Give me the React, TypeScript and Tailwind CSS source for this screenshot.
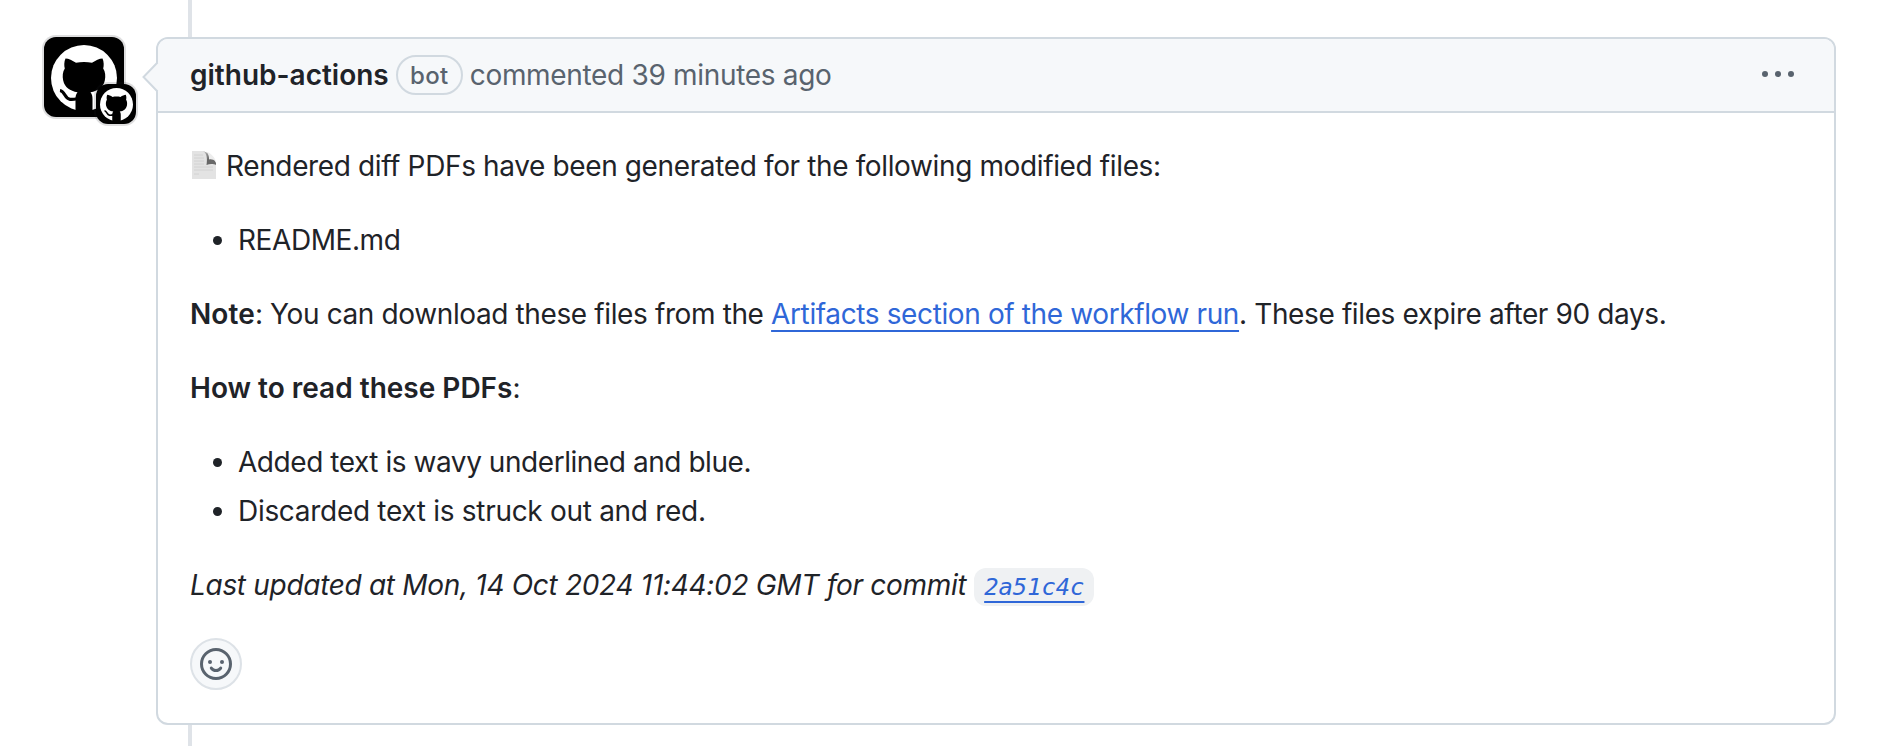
import React from "react";

function Mark({ className }: { className: string }) {
  return (
    <svg viewBox="0 0 66 66" className={className}>
      <circle cx="33" cy="33" r="33" fill="#fff" />
      <path
        d="M14.500 13.500C17.500 13.500 21.500 15.500 25 17.800C30 16.600 36 16.600 41 17.800C44.500 15.500 48.500 13.500 51.500 13.500C53 17 53 20.500 52.200 23.500C54.300 26.500 54.800 31 53.800 35.500C52.300 42.500 47 46 39.500 47.200C41 49 41.500 51 41.500 54V66H24.500V54C24.500 51 25 49 26.500 47.200C19 46 13.700 42.500 12.200 35.500C11.200 31 11.700 26.500 13.800 23.500C13 20.500 13 17 14.500 13.500Z"
        fill="#000"
      />
      <path d="M9 45.500C14 46 13.500 53.500 19 54.300C21.500 54.600 23.500 54.300 26 53.800" fill="none" stroke="#000" strokeWidth="3.200" />
    </svg>
  );
}

function PageEmoji() {
  return (
    <svg viewBox="0 0 24 28" className="mr-[10px] ml-[2px] inline-block h-[28px] w-[24px] align-[-3px]">
      <defs>
        <linearGradient id="curl" x1="0" y1="0" x2="1" y2="1">
          <stop offset="0" stopColor="#c8c8c8" />
          <stop offset="0.5" stopColor="#666" />
          <stop offset="1" stopColor="#6a6a6a" />
        </linearGradient>
      </defs>
      <path d="M0 0H12L24 12V28H0Z" fill="#e3e3e3" />
      <path d="M11 0C15 2 15.500 8 14.500 14C18 12.500 22 13 24 14V12C22 7 18 2 11 0Z" fill="url(#curl)" />
      <path d="M14 0.500C19 2 22.500 6 24 10.500C21.500 8.500 19 8 17 8.500C17.300 5 16 2.500 14 0.500Z" fill="#ededed" />
      <path d="M2 4H11M2 7H12M2 10H12M2 13H12M2 16H21M2 19H21M2 23H7" stroke="#d2d2d2" strokeWidth="1" />
    </svg>
  );
}

function Item({ children }: { children: React.ReactNode }) {
  return (
    <li className="flex items-center pl-[23px]">
      <span className="mr-[16px] h-[9px] w-[9px] rounded-full bg-[#1f2328]" />
      {children}
    </li>
  );
}

export default function App() {
  return (
    <div className="flex h-[746px] w-[1892px] overflow-hidden bg-white pl-[44px] font-['Inter','Liberation_Sans',sans-serif] text-[28px] leading-[42px] text-[#1f2328]">
      <div className="relative mt-[37px] h-[80px] w-[80px] shrink-0 rounded-[12px] bg-black shadow-[0_0_0_2px_rgba(31,35,40,0.15)]">
        <Mark className="absolute top-[8px] left-[7px] h-[66px] w-[66px]" />
        <div className="absolute top-[47px] left-[52px] flex h-[40px] w-[40px] items-center justify-center rounded-[12px] bg-black shadow-[0_0_0_2px_rgba(31,35,40,0.15)]">
          <Mark className="h-[33px] w-[33px]" />
        </div>
      </div>

      <div className="ml-[32px] flex w-[1680px] flex-col">
        <div className="ml-[32px] h-[37px] w-[4px] shrink-0 bg-[#dfe3e8]" />

        <div className="relative h-[688px] shrink-0 rounded-[12px] border-2 border-[#d1d9e0] bg-white">
          <header className="flex h-[74px] items-center rounded-t-[10px] border-b-2 border-[#d1d9e0] bg-[#f6f8fa] pr-[40px] pl-[32px] text-[#59636e]">
            <strong className="font-semibold text-[#1f2328]">github-actions</strong>
            <span className="ml-[7px] flex h-[40px] w-[67px] items-center justify-center rounded-full border-2 border-[#d1d9e0] pt-[2px] text-[24px] font-medium tracking-[0.3px]">
              bot
            </span>
            <span className="ml-[7px] tracking-[-0.32px]">commented 39 minutes ago</span>
            <svg viewBox="0 0 32 6" className="mb-[2px] ml-auto h-[6px] w-[32px]" fill="#59636e">
              <circle cx="3" cy="3" r="3" />
              <circle cx="16" cy="3" r="3" />
              <circle cx="29" cy="3" r="3" />
            </svg>
          </header>

          <svg viewBox="0 0 18 32" className="absolute top-[22px] left-[-17px] h-[32px] w-[18px]">
            <path d="M17 2L3 16L17 30V32H18V0H17Z" fill="#f6f8fa" />
            <path d="M16.500 1.500L2.500 16L16.500 30.500" fill="#f6f8fa" stroke="#d1d9e0" strokeWidth="2" />
          </svg>

          <div className="flex flex-col gap-[32px] px-[32px] pt-[32px] whitespace-nowrap">
            <p className="h-[42px] tracking-[-0.37px]">
              <PageEmoji />
              <span>Rendered diff PDFs have been generated for the following modified files:</span>
            </p>
            <ul className="flex flex-col">
              <Item>
                <span className="tracking-[-0.42px]">README.md</span>
              </Item>
            </ul>
            <p className="tracking-[-0.38px]">
              <strong className="font-semibold tracking-[0.1px]">Note</strong>: You can download these files from the{" "}
              <a className="text-[#2f67d8] underline decoration-2 underline-offset-[6px]">
                Artifacts section of the workflow run
              </a>
              . These files expire after 90 days.
            </p>
            <p>
              <strong className="font-semibold">How to read these PDFs</strong>:
            </p>
            <ul className="flex flex-col gap-[7px]">
              <Item>
                <span className="tracking-[-0.45px]">Added text is wavy underlined and blue.</span>
              </Item>
              <Item>
                <span className="tracking-[-0.3px]">Discarded text is struck out and red.</span>
              </Item>
            </ul>
            <p className="flex h-[42px] items-center italic">
              <span className="tracking-[-0.31px]">Last updated at Mon, 14 Oct 2024 11:44:02 GMT for commit</span>
              <code className="mt-[4px] ml-[8px] flex h-[38px] w-[120px] items-center justify-center rounded-[12px] bg-[#eff1f3] font-['DejaVu_Sans_Mono',monospace] text-[23.8px] text-[#2f67d8]">
                <span className="underline decoration-2 underline-offset-[6px]">2a51c4c</span>
              </code>
            </p>
            <button className="flex h-[52px] w-[52px] items-center justify-center rounded-full border-2 border-[#dde2e7] bg-[#f6f8fa]">
              <svg viewBox="0 0 32 32" className="h-[32px] w-[32px] shrink-0" fill="none">
                <circle cx="16" cy="16" r="14.500" stroke="#59636e" strokeWidth="3" />
                <circle cx="10" cy="14" r="2" fill="#59636e" />
                <circle cx="22" cy="14" r="2" fill="#59636e" />
                <path
                  d="M11.300 20.100C12.300 21.600 14 22.500 16 22.500S19.700 21.600 20.700 20.100"
                  stroke="#59636e"
                  strokeWidth="3"
                  strokeLinecap="round"
                />
              </svg>
            </button>
          </div>
        </div>

        <div className="ml-[32px] h-[21px] w-[4px] shrink-0 bg-[#dfe3e8]" />
      </div>
    </div>
  );
}
